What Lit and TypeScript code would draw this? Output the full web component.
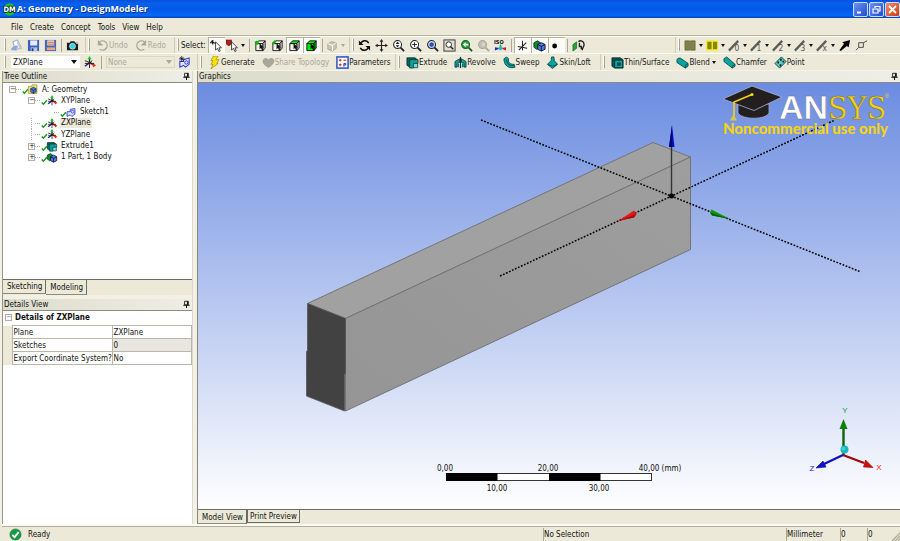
import { LitElement, html, svg, css, TemplateResult, SVGTemplateResult } from "lit";
import { customElement, property, state } from "lit/decorators.js";
import { classMap } from "lit/directives/class-map.js";

const cube = (front: string, top: string, side: string) => svg`
  <path d="M2 5 L5 2 H12 L9.5 5 Z" fill=${top} stroke="#000" stroke-width=".9"/>
  <path d="M9.5 5 L12 2 V10 L9.5 12.5 Z" fill=${side} stroke="#000" stroke-width=".9"/>
  <path d="M2 5 H9.5 V12.5 H2 Z" fill=${front} stroke="#000" stroke-width=".9"/>`;
const pick = svg`<path d="M6 4.5 V11 L7.5 9.6 L8.6 12 L9.8 11.4 L8.7 9.2 H10.8 Z" fill="#111"/>`;
const lens = (inner: SVGTemplateResult, glass = "#fff", ink = "#222") => svg`
  <path d="M9 9 L13 13" stroke=${ink} stroke-width="2"/>
  <circle cx="6" cy="6" r="4.3" fill=${glass} stroke=${ink} stroke-width="1.1"/>${inner}`;
const pencil = (label: string) => svg`
  <path d="M1 12.5 L11 2" stroke="#5c5c58" stroke-width="2.4"/>
  <text x="7" y="13" font-size="9" fill="#555">${label}</text>`;
const teal = "#08a5a0";

const icons: Record<string, SVGTemplateResult> = {
  fresh: svg`<path d="M3 3 L8 1 L12 9 L6 12 Z" fill="#fff" stroke="#8c9bc0"/><path d="M1 11 C4 7 7 6 9 8 L6 12 H2 Z" fill="#8fa4d8"/><path d="M8 3 L12 11" stroke="#bcc7e2" stroke-width="2"/>`,
  save: svg`<path d="M1 1 H13 V13 H1 Z" fill="#3c62c4"/><path d="M3.5 1.5 H11 V7 H3.5 Z" fill="#e8edfa"/><path d="M4 9 H11 V13 H4 Z" fill="#b9c5e6"/><path d="M5 10 H7 V13 H5 Z" fill="#24418e"/>`,
  export: svg`<path d="M1 1 H13 V13 H1 Z" fill="#4767b8"/><path d="M3.5 1.5 H11 V7 H3.5 Z" fill="#f2e9df"/><path d="M4 3.5 H11 M4 5.5 H11" stroke="#d25a2a"/><path d="M3 9 H12 V12 H3 Z" fill="#e9a882"/>`,
  camera: svg`<path d="M1 4 H4 L5 2.5 H9 L10 4 H13 V12 H1 Z" fill="#1b1b22"/><circle cx="7" cy="7.8" r="3.2" fill="#35d6e4" stroke="#fff" stroke-width=".6"/><path d="M11 4.8 H13" stroke="#ddd"/>`,
  undo: svg`<path d="M3 4 A5 5 0 1 1 4 11" fill="none" stroke="#aaa89a" stroke-width="1.5"/><path d="M2 1 V7 H8 Z" fill="#aaa89a"/>`,
  redo: svg`<path d="M11 4 A5 5 0 1 0 10 11" fill="none" stroke="#aaa89a" stroke-width="1.5"/><path d="M12 1 V7 H6 Z" fill="#aaa89a"/>`,
  arrow: svg`<path d="M1 2 L6 5 M3 1 V6 M0 4 H5" stroke="#111" stroke-width="1.2"/><path d="M6 3 V12 L8 10 L9.6 13.5 L11 12.8 L9.6 9.5 H12.4 Z" fill="#fff" stroke="#111" stroke-width=".8"/>`,
  filter: svg`<path d="M0 1 H6 V5 L4 7 H2 L0 5 Z" fill="#a22" stroke="#500" stroke-width=".5"/><path d="M6 3 V12 L8 10 L9.6 13.5 L11 12.8 L9.6 9.5 H12.4 Z" fill="#fff" stroke="#111" stroke-width=".8"/>`,
  selPoint: svg`${cube("#f4f3ea", "#fff", "#ddd")}${pick}<circle cx="3" cy="4" r="2.2" fill="#0b0"/>`,
  selEdge: svg`${cube("#f4f3ea", "#fff", "#ddd")}${pick}<path d="M2 5 L5 2" stroke="#0b0" stroke-width="2.6"/>`,
  selFace: svg`${cube("#f4f3ea", "#0e0", "#ddd")}${pick}`,
  selBody: svg`${cube("#0e0", "#0e0", "#0a0")}${pick}`,
  extend: svg`<path d="M2 5 L6 3 L11 4 V10 L7 13 L2 11 Z" fill="#c9c6b6" stroke="#aaa89a"/><path d="M2 5 L7 7 L11 4 M7 7 V13" stroke="#fff" fill="none"/>`,
  rotate: svg`<path d="M3 5 A4.5 4.5 0 0 1 11.5 4.6 M11 9 A4.5 4.5 0 0 1 2.500 9.4" fill="none" stroke="#111" stroke-width="1.6"/><path d="M1 1.5 V6.5 H6 Z M13 12.5 V7.5 H8 Z" fill="#111"/>`,
  pan: svg`<path d="M7 2 V12 M2 7 H12" stroke="#222" stroke-width="1.2"/><path d="M7 0 L9 3 H5 Z M7 14 L9 11 H5 Z M0 7 L3 5 V9 Z M14 7 L11 5 V9 Z" fill="#222"/>`,
  zoomDrag: lens(svg`<path d="M6 2.8 L8 5.3 H4 Z M6 9.2 L8 6.7 H4 Z" fill="#222"/>`),
  zoomIn: lens(svg`<path d="M6 3.5 V8.5 M3.5 6 H8.5" stroke="#222"/>`),
  zoomFit: lens(svg`<path d="M4 4.5 L6 3.5 L8.3 4.5 V7.5 L6 8.6 L3.8 7.5 Z" fill="#2451b8"/>`, "#c9d6f4"),
  zoomBox: svg`<rect x="1" y="1" width="12" height="12" fill="#e3e0d2" stroke="#333"/><path d="M8 8 L11 11" stroke="#222" stroke-width="1.6"/><circle cx="6.2" cy="6" r="3" fill="#fff" stroke="#222"/>`,
  zoomPrev: lens(svg`<path d="M3 6 L6 3.4 V5 H9 V7 H6 V8.6 Z" fill="#fff"/>`, "#29a33a", "#14601f"),
  zoomNext: lens(svg`<path d="M9 6 L6 3.4 V8.6 Z" fill="#ddd"/>`, "#c4c1b2", "#aaa89a"),
  iso: svg`<text x="0" y="5" font-size="6" font-weight="bold" fill="#111">ISO</text><path d="M7 6 V10" stroke="#1a1" stroke-width="1.6"/><path d="M7 10 L13 9 V12.5 Z" fill="#c22"/><path d="M7 10 L1 9 V12.5 Z" fill="#22c"/><circle cx="7" cy="10" r="2.2" fill="#2bc"/>`,
  axes: svg`<path d="M7 2 V12 M2 8 L12 10 M11 4 L3 12" stroke="#222" stroke-width="1.1"/>`,
  model: svg`<path d="M1 4 L5 2 L8 4 V9 L4 11 L1 9 Z" fill="#118a2a" stroke="#042"/><path d="M5 6 L9 4 L13 6 V11 L9 13 L5 11 Z" fill="#4a7fe0" stroke="#113"/><path d="M5 6 L9 8 L13 6 M9 8 V13" stroke="#113" fill="none"/>`,
  dot: svg`<circle cx="5" cy="7.5" r="2.6" fill="#000"/>`,
  lookAt: svg`<path d="M1 6 L5 3 V10 L1 13 Z" fill="#2aa52a" stroke="#063" stroke-width=".7"/><path d="M7 3 C9 1 13 2 13 6 C13 9 11 9 11 12 M8 4 V8 H10 V11" fill="none" stroke="#222" stroke-width="1.5"/>`,
  olive: svg`<path d="M1 2 H6 V12 H1 Z M7 2 H12 V12 H7 Z" fill="#828048" stroke="#606035" stroke-width=".7"/>`,
  yellow: svg`<path d="M0 1.5 H13 V12.5 H0 Z" fill="#f2ee20"/><path d="M1.5 3 H6 V11 H1.5 Z M7.5 3 H12 V11 H7.5 Z" fill="#8a8600"/>`,
  p0: pencil("0"), p1: pencil("1"), p2: pencil("2"), p3: pencil("3"), px: pencil("x"),
  dart: svg`<path d="M13 1 L11.5 9 L9.5 7.5 L3 13 L1.5 12 L6.5 5 L4.5 3.5 Z" fill="#000"/>`,
  node: svg`<path d="M4 4 H9 V9 H4 Z" fill="none" stroke="#444"/><path d="M9 4 L13 2 M4 9 L1 12" stroke="#444"/>`,
  plane: svg`<path d="M7 7 L2 11" stroke="#22c" stroke-width="1.6"/><path d="M7 7 L12 10" stroke="#d22" stroke-width="2"/><path d="M7 9 V2" stroke="#161" stroke-width="1.4"/><path d="M7 0 L9.2 3.6 H4.8 Z" fill="#1c1"/><path d="M2 5 L12 9 M2 8 H12 M10 5 L4 10 M7 4 V13" stroke="#222" stroke-width="1"/><path d="M10 8 L14 10 L11 12 Z" fill="#e22"/>`,
  sketch: svg`<path d="M2 6 H6 V3 L12 2 V9 L8 12 L6 10 L2 12 Z" fill="#dfe4ff" stroke="#2a36cc" stroke-width="1.1"/><circle cx="9" cy="6" r="1.8" fill="none" stroke="#2a36cc"/>`,
  newSketch: svg`<path d="M2 6 H6 V4 L12 2 V9 L8 12 L6 10 L2 12 Z" fill="#dfe4ff" stroke="#2a36cc" stroke-width="1.1"/><circle cx="9" cy="7" r="1.8" fill="none" stroke="#2a36cc"/><path d="M1 3 H7 M4 0 V6 M2 1 L6 5 M6 1 L2 5" stroke="#111" stroke-width=".8"/>`,
  bolt: svg`<path d="M6 0 H11 L8.5 4 H12 L9.5 8 H11 L3 14 L5.5 9 H3 L5.5 5 H3 Z" fill="#f8e20c" stroke="#8a7a00" stroke-width=".6"/>`,
  heart: svg`<path d="M7 13 C1 9 0 7 1 4 C3 1 6 2 7 4 C8 2 11 1 13 4 C14 7 12 9 7 13 Z" fill="#a9a79a"/>`,
  params: svg`<rect x="1" y="1" width="12" height="12" fill="#fff" stroke="#2452c8" stroke-width="1.6"/><path d="M3 4.5 H6 M4.5 3 V6 M8 4.5 H11 M3 9.5 H6 M4.5 8 V11" stroke="#c22" stroke-width="1.1"/><path d="M8.5 11.5 V8 H10.5 V9.6 H8.5" stroke="#22c" fill="none"/>`,
  extrude: svg`<path d="M1 2 H10 L12 4 H4 V12 L1 10 Z" fill="#066" stroke="#022" stroke-width=".8"/><path d="M4 4 H13 V8 H8 V13 H4 Z" fill=${teal} stroke="#033" stroke-width=".8"/><path d="M8 8 H12.6 V12.6 H8 Z" fill="#7fd8d4" stroke="#033" stroke-width=".8"/>`,
  revolve: svg`<path d="M7 1 V13" stroke="#033" stroke-width="1.2"/><path d="M6 3 L1 6 V12 H3 V8 L6 7 Z M8 3 L13 6 V12 H11 V8 L8 7 Z" fill=${teal} stroke="#033" stroke-width=".8"/><path d="M4.5 8 V12 M9.500 8 V12" stroke="#077" stroke-width="2"/>`,
  sweep: svg`<path d="M1 3 L4 1 L6 3 C5 7 8 9 12 9 L13 12 C7 14 1 11 1 3 Z" fill=${teal} stroke="#033" stroke-width=".8"/><path d="M4 4 C4 9 8 11 12 10" fill="none" stroke="#044"/>`,
  loft: svg`<path d="M6 1 H8.5 L9 5 L12.5 9 L7 13.4 L1.5 9 L5.5 5 Z" fill=${teal} stroke="#033" stroke-width=".8"/><path d="M2 9.2 L7 11 L12 9.2" fill="none" stroke="#055"/>`,
  thin: svg`<path d="M1 2 H10 L13 4 V13 H4 L1 11 Z" fill="#055" stroke="#022" stroke-width=".8"/><path d="M4 4.5 H12.6 V12.6 H4 Z" fill=${teal} stroke="#022" stroke-width=".8"/><path d="M6.5 7 H10.5 V10.5 H6.5 Z" fill="#044"/>`,
  blend: svg`<path d="M1 4 C2 2 4 2 5 2.5 L13 8 V11 L10 13 L1 7 Z" fill=${teal} stroke="#033" stroke-width=".8"/><path d="M13 8 L10 10 V13" fill="none" stroke="#033" stroke-width=".7"/>`,
  chamfer: svg`<path d="M1 3 L4 1 L13 9 V11 L10 13 L1 6 Z" fill=${teal} stroke="#033" stroke-width=".8"/><path d="M13 9 L10 11 V13" fill="none" stroke="#033" stroke-width=".7"/>`,
  point: svg`<path d="M1 8 L8 1 L13 6 L6 13 Z" fill="#5fc9c5" stroke="#033" stroke-width=".9"/><path d="M7.500 3 V5 M4.500 6 V8 M7 9 V11 M10 5 V7" stroke="#022" stroke-width="1.8"/>`,
  project: svg`<path d="M1 3 H5 L6 1 H12 V12 H1 Z" fill="#f3e27c" stroke="#8f7d20" stroke-width=".8"/><path d="M4 6 L7.5 4 L11 6 V10 L7.5 12 L4 10 Z" fill="#4a7fe0" stroke="#113" stroke-width=".8"/><path d="M4 6 L7.5 8 L11 6 M7.5 8 V12" stroke="#113" stroke-width=".8" fill="none"/>`,
  check: svg`<path d="M3 8 L6 11 L12 4" fill="none" stroke="#149a14" stroke-width="2.4"/>`,
  pin: svg`<path d="M4 2 H10 V7.5 H4 Z" fill="none" stroke="#111" stroke-width="1.3"/><path d="M8.5 2 V7 M2 8 H12 M7 8 V12.5" stroke="#111" stroke-width="1.6"/>`,
  app: svg`<circle cx="7" cy="7" r="6.6" fill="#1cc42a"/><text x="7" y="10" text-anchor="middle" font-size="8" font-weight="bold" fill="#fff" stroke="#022" stroke-width="1.6" paint-order="stroke">DM</text>`,
  ready: svg`<circle cx="7" cy="7" r="6" fill="#169a48" stroke="#0c6e30" stroke-width=".6"/><path d="M3.6 7.4 L6 9.8 L10.4 4.4" stroke="#fff" stroke-width="2" fill="none"/>`,
};

const icon = (name: string, cls = "icon") =>
  html`<svg class=${cls} viewBox="0 0 14 14" aria-hidden="true">${icons[name]}</svg>`;

interface Tool { icon?: string; label?: string; on?: boolean; off?: boolean; menu?: boolean; sep?: boolean }

const S: Tool = { sep: true };

@customElement("tool-group")
class ToolGroup extends LitElement {
  @property({ attribute: false }) tools: Tool[] = [];

  static styles = css`
    :host { display: flex; align-items: center; height: 100%; border-right: 1px solid #cfccba; box-sizing: border-box; }
    .grip { width: 2px; height: 12px; margin: 0 2px; border-right: 1px solid #a5a28f; border-left: 1px solid #fff; box-sizing: border-box; flex: none; }
    .sep { width: 1px; height: 13px; margin: 0 2px; background: #a9a694; }
    button { display: flex; align-items: center; justify-content: center; height: 16px; min-width: 17px; padding: 0 1px;
      margin: 0; border: 0; background: none; color: #1a1a1a; font: inherit; white-space: nowrap; }
    button.menu { min-width: 22px; gap: 2px; }
    button.text { padding: 0 3px 0 4px; gap: 0; }
    button.on { background: #fbfaf5; box-shadow: inset 1px 1px #b4b19f; }
    button:disabled { color: #aaa89a; }
    button.menu.off .caret { border-top-color: #aaa89a; }
    .icon { width: 13px; height: 13px; flex: none; }
    .caret { border: 2px solid transparent; border-top: 3px solid #111; border-bottom: 0; }
    button.text .caret { margin-left: 2px; }
  `;

  render() {
    return html`<span class="grip"></span><slot></slot>${this.tools.map((t) =>
      t.sep
        ? html`<span class="sep"></span>`
        : html`<button class=${classMap({ on: !!t.on, off: !!t.off, menu: !!t.menu, text: !!t.label })}
            ?disabled=${!!t.off} aria-label=${t.label ?? t.icon ?? ""}>
            ${icon(t.icon!)}${t.label ? html`<span>${t.label}</span>` : ""}${t.menu ? html`<span class="caret"></span>` : ""}
          </button>`)}`;
  }
}

@customElement("model-scene")
class ModelScene extends LitElement {
  static styles = css`
    :host { display: block; flex: 1; min-height: 0; background: linear-gradient(#6b8ce0, #ffffff); overflow: hidden; }
    svg { display: block; width: 100%; height: 100%; }
    .scale { font: 8px "DejaVu Sans Condensed", "DejaVu Sans", sans-serif; fill: #111; text-anchor: middle; }
    .note { font: 900 15px Lato, sans-serif; fill: #f6d313; }
    .sans { font: bold 34px "Liberation Sans", sans-serif; fill: #fff; stroke: #6b7394; stroke-width: .5; }
    .serif { font: 32px "DejaVu Serif Condensed", "DejaVu Serif", serif; fill: #f6d313; stroke: #75703c; stroke-width: .5; }
    .reg { font: 5px "Liberation Sans", sans-serif; fill: #f6d313; stroke: none; }
    .axis { font: 8px "Liberation Sans", sans-serif; text-anchor: middle; }
    .dots { stroke: #000; stroke-width: 1.5; stroke-dasharray: 1.8 1.5; }
    .edge { stroke: #747474; stroke-width: 1; stroke-linejoin: round; }
  `;

  render() {
    return html`<svg viewBox="198 83 702 426" role="img" aria-label="Extruded block">
      <defs>
        <linearGradient id="side" x1="0" y1="1" x2="1" y2="0"><stop offset="0" stop-color="#959595"/><stop offset="1" stop-color="#9e9e9e"/></linearGradient>
      </defs>
      <path class="edge" d="M307.500 303.500 L653 142.500 L690.500 157 L345.500 318.500 Z" fill="#a1a1a1"/>
      <path class="edge" d="M345.500 318.500 L690.500 157 V249.500 L345.500 411 Z" fill="url(#side)"/>
      <path d="M307.500 303.500 L345.500 318.500 V373 L344.500 375 V411 L306.500 396 V352 L307.500 350 Z" fill="#424242" stroke="#555" stroke-width=".8"/>

      <path d="M738 104 H769 V113 C766 120 742 120 738 113 Z" fill="#231f20" stroke="#aab4d6" stroke-width=".7"/>
      <path d="M723 99 L752 86 L782 97 L754 110.500 Z" fill="#231f20" stroke="#aab4d6" stroke-width=".8"/>
      <path d="M752 94.500 L734 102 V116" fill="none" stroke="#f6d313" stroke-width="1.6"/>
      <circle cx="752" cy="94.500" r="1.600" fill="#f6d313"/>
      <path d="M733.500 114 L737 120.500 H730 Z" fill="#d9c54a"/>
      <text class="sans" x="779" y="119">AN<tspan class="serif" x="828">SYS</tspan><tspan class="reg" x="885" y="98">®</tspan></text>

      <path class="dots" d="M481 120 L861 272"/>
      <path class="dots" d="M500 276 L835 120"/>
      <text class="note" x="723" y="134">Noncommercial use only</text>
      <path d="M671.500 196 V146" stroke="#333" stroke-width="1.4"/>
      <path d="M672 125 L674.500 147 H669 Z" fill="#0c0cb4"/><path d="M672 125 V147 H669 Z" fill="#05057a"/>
      <path d="M618 221 L634 210.500 L636.500 214 L634 217.500 Z" fill="#e01818"/><path d="M618 221 L636.500 214 L634 217.500 Z" fill="#a80c0c"/>
      <path d="M730 219 L711.500 209.500 L710 212.500 L712 215.500 Z" fill="#0c980c"/><path d="M730 219 L710 212.500 L712 215.500 Z" fill="#056205"/>
      <circle cx="671.500" cy="196" r="2.500" fill="#000"/>

      <rect x="446.500" y="473.500" width="205" height="7" fill="#fff" stroke="#333"/>
      <path d="M446 473 H497.500 V481 H446 Z M549 473 H600.500 V481 H549 Z" fill="#000"/>
      <g class="scale">
        <text x="445" y="471">0,00</text><text x="548" y="471">20,00</text><text x="660" y="471">40,00 (mm)</text>
        <text x="497" y="491">10,00</text><text x="599" y="491">30,00</text>
      </g>

      <path d="M843.500 455 V428" stroke="#0a640a" stroke-width="2.4"/><path d="M843.500 419 L847.500 429 H839.500 Z" fill="#0a800a"/>
      <path d="M843 455 L864 463" stroke="#a00a0a" stroke-width="2.4"/><path d="M873 467.500 L865.500 460 L863.500 467 Z" fill="#cc1010" stroke="#900" stroke-width=".6"/>
      <path d="M843 455 L824 464" stroke="#1010c0" stroke-width="2.4"/><path d="M816 468 L823 461 L826 467 Z" fill="#1010c8" stroke="#009" stroke-width=".6"/>
      <circle cx="844.500" cy="449.500" r="4" fill="#18b8bc"/><circle cx="843.500" cy="448.500" r="1.800" fill="#3ad4d8"/>
      <g class="axis"><text x="845" y="413" fill="#0c9c2c">Y</text><text x="879" y="470" fill="#e22">X</text><text x="812" y="471" fill="#22d">Z</text></g>
    </svg>`;
  }
}

interface TreeNode { label: string; icon: string; level: number; box?: string }

@customElement("app-root")
class AppRoot extends LitElement {
  @state() private selected = "ZXPlane";

  private menus = ["File", "Create", "Concept", "Tools", "View", "Help"];

  private nodes: TreeNode[] = [
    { label: "A: Geometry", icon: "project", level: 0, box: "−" },
    { label: "XYPlane", icon: "plane", level: 1, box: "−" },
    { label: "Sketch1", icon: "sketch", level: 2 },
    { label: "ZXPlane", icon: "plane", level: 1 },
    { label: "YZPlane", icon: "plane", level: 1 },
    { label: "Extrude1", icon: "extrude", level: 1, box: "+" },
    { label: "1 Part, 1 Body", icon: "model", level: 1, box: "+" },
  ];

  private details = [["Plane", "ZXPlane"], ["Sketches", "0"], ["Export Coordinate System?", "No"]];

  static styles = css`
    :host { display: flex; flex-direction: column; height: 100vh; overflow: hidden; background: #ece9d8; color: #111;
      font: 8px/11px "DejaVu Sans Condensed", "DejaVu Sans", sans-serif; }
    * { box-sizing: border-box; }
    button, select { font: inherit; color: inherit; margin: 0; }
    .icon { width: 13px; height: 13px; flex: none; }
    .title { display: flex; align-items: center; height: 18px; flex: none; padding: 0 0 0 3px; gap: 1px;
      background: linear-gradient(#0a50d8, #0560ee 20%, #0458e4 50%, #0668fa 85%, #0342b8); color: #fff; }
    .title h1 { flex: 1; margin: 0; font: bold 9px/14px "Open Sans", "Noto Sans", sans-serif; text-shadow: 1px 1px #0a2f86; }
    .title button { width: 15px; height: 15px; padding: 0; border: 1px solid #cfdcf8; border-radius: 2px;
      background: linear-gradient(135deg, #6d94f2, #1d4bd0); display: grid; place-items: center; }
    .title button.close { background: linear-gradient(135deg, #f08c6c, #d03a10); }
    .title button svg { width: 11px; height: 11px; }
    .menu { display: flex; align-items: center; gap: 7px; height: 18px; flex: none; padding: 1px 0 0 11px; border-bottom: 1px solid #b5b2a0; }
    .menu button { border: 0; padding: 0; background: none; }
    .bar { display: flex; align-items: center; height: 17px; flex: none; padding-left: 2px; border-top: 1px solid #fff; }
    .bar + .bar { height: 18px; border-bottom: 1px solid #f6f4ea; }
    .sel { padding-right: 2px; }
    .files { min-width: 84px; } .history { min-width: 89px; } .picks { min-width: 175px; }
    .wide { min-width: 326px; }
    .last { border-right: 0; }
    .g1 { min-width: 196px; } .g2 { min-width: 198px; } .g3 { min-width: 205px; }
    .combo { display: grid; align-items: center; width: 69px; height: 12px; margin: 0 2px 0 3px; background: #fff; }
    .combo > * { grid-area: 1 / 1; }
    .combo::after { content: ""; grid-area: 1 / 1; justify-self: end; margin-right: 3px; border: 3px solid transparent; border-top: 4px solid #111; border-bottom: 0; pointer-events: none; }
    .combo.off { background: #ece9d8; color: #aaa89a; box-shadow: inset 0 0 0 1px #dad7c6; }
    .combo.off::after { border-top-color: #aaa89a; }
    .combo select { appearance: none; border: 0; background: none; padding: 0 2px; width: 100%; height: 12px; opacity: 1; }
    .mini { border: 0; background: none; padding: 0 1px; height: 14px; display: flex; align-items: center; }
    .vsep { width: 1px; height: 13px; background: #a9a694; margin: 0 1px 0 4px; }
    .work { flex: 1; display: flex; gap: 4px; min-height: 0; padding-left: 2px; background: #f3f1e6; }
    .side { width: 191px; flex: none; display: flex; flex-direction: column; gap: 4px; border-left: 1px solid #98958a; border-right: 1px solid #dcd9ca; }
    .pane { display: flex; flex-direction: column; background: #ece9d8; min-height: 0; }
    .outline { flex: 224 1 0; } .detail { flex: 226 1 0; }
    .view { flex: 1; min-width: 0; border-left: 1px solid #88857a; }
    header { display: flex; justify-content: space-between; align-items: center; height: 12px; flex: none; padding: 0 1px;
      background: linear-gradient(90deg, #dcdccb, #efeee6); border-bottom: 1px solid #8d8b7d; }
    header h2 { margin: 0; font: inherit; }
    header .icon { width: 9px; height: 9px; }
    .body { flex: 1; min-height: 0; background: #fff; border-bottom: 1px solid #6e6c60; }
    .detail .body { border-bottom: 0; }
    ul { list-style: none; margin: 0; padding: 1px 0 0 6px; height: 80px; display: flex; flex-direction: column; }
    li { flex: 1 1 0; min-height: 0; display: flex; align-items: center; }
    .l1 { padding-left: 19px; } .l2 { padding-left: 38px; }
    .box { display: grid; place-items: center; width: 7px; height: 7px; border: 1px solid #b2b0a6; font: 7px/5px "DejaVu Sans", sans-serif; padding: 0; background: #fff; flex: none; }
    .blank { width: 7px; height: 7px; flex: none; }
    .l1 .blank { border-left: 1px dotted #aaa; margin-left: 3px; width: 4px; height: 100%; }
    .stub { width: 5px; border-top: 1px dotted #aaa; }
    .check { width: 8px; height: 8px; margin: 3px -2px 0 0; flex: none; }
    li .icon { width: 12px; height: 11px; }
    .name { border: 0; background: none; padding: 0 1px; margin-left: 2px; line-height: 10px; white-space: nowrap; }
    .name.on { background: #ece9d8; }
    .tabs { display: flex; height: 15px; flex: none; align-items: flex-start; }
    .tabs button { height: 14px; padding: 0 3px 0 4px; border: 0; border-right: 1px solid #6e6c60; border-bottom: 1px solid #8d8b7d; background: #ece9d8; white-space: nowrap; }
    .tabs button.on { height: 15px; padding-top: 2px; }
    .view .tabs { border-top: 1px solid #6e6c60; }
    .view .tabs .other { border: 1px solid #6e6c60; border-top: 0; padding: 0 2px; height: 13px; }
    .view .tabs .on { height: 14px; }
    table { border-collapse: collapse; width: 100%; table-layout: fixed; }
    th { text-align: left; font-weight: bold; padding: 0; height: 15px; }
    th span { display: flex; align-items: center; gap: 3px; padding-left: 2px; }
    th .box { color: #777; }
    td { padding: 0 1px 0 1px; border: 1px solid #bab7aa; line-height: 11px; white-space: nowrap; height: 13px; }
    td.gut { border: 0; background: #ece9d8; padding: 0; }
    td.gray { background: #e8e6e0; }
    .c1 { width: 9px; } .c2 { width: 100px; }
    .status { display: flex; align-items: center; height: 15px; flex: none; margin: 2px 0 0 2px; border-top: 1px solid #b0ad9c; box-shadow: 0 -2px #fbfaf5; }
    .status div { height: 13px; display: flex; align-items: center; border-left: 1px solid #a9a694; white-space: nowrap; }
    .status .main { flex: 1; border-left: 0; padding-left: 7px; gap: 6px; }
    .w1 { width: 243px; } .w2 { width: 54px; } .w3 { width: 27px; } .w4 { width: 24px; }
    .status .size { width: 9px; height: 9px; align-self: flex-end; }
  `;

  private frame(title: string) {
    return html`<header><h2>${title}</h2>${icon("pin")}</header>`;
  }

  private row(n: TreeNode): TemplateResult {
    return html`<li class="l${n.level}">
      ${n.box ? html`<button class="box" aria-label="toggle ${n.label}">${n.box}</button>` : html`<span class="blank"></span>`}
      <span class="stub"></span>${icon("check", "check")}${icon(n.icon)}
      <button class=${classMap({ name: true, on: n.label === this.selected })} @click=${() => (this.selected = n.label)}>${n.label}</button>
    </li>`;
  }

  render() {
    return html`
      <div class="title">${icon("app")}<h1>A: Geometry - DesignModeler</h1>
        <button aria-label="Minimize"><svg viewBox="0 0 11 11"><path d="M2 8.500 H6" stroke="#fff" stroke-width="2"/></svg></button>
        <button aria-label="Restore"><svg viewBox="0 0 11 11"><path d="M4 2.500 H9 V7 H7.500 M4 2 V4 M2 5 H7 V9 H2 Z" stroke="#fff" stroke-width="1.200" fill="none"/></svg></button>
        <button class="close" aria-label="Close"><svg viewBox="0 0 11 11"><path d="M2 2 L9 9 M9 2 L2 9" stroke="#fff" stroke-width="1.800"/></svg></button>
      </div>
      <nav class="menu">${this.menus.map((m) => html`<button>${m}</button>`)}</nav>
      <div class="bar">
        <tool-group class="files" .tools=${[{ icon: "fresh" }, { icon: "save" }, { icon: "export" }, S, { icon: "camera" }]}></tool-group>
        <tool-group class="history" .tools=${[{ icon: "undo", label: "Undo", off: true }, { icon: "redo", label: "Redo", off: true }]}></tool-group>
        <tool-group class="picks" .tools=${[{ icon: "arrow", on: true }, { icon: "filter", menu: true }, S, { icon: "selPoint" }, { icon: "selEdge" },
          { icon: "selFace", on: true }, { icon: "selBody", on: true }, S, { icon: "extend", menu: true, off: true }]}><span class="sel">Select:</span></tool-group>
        <tool-group class="wide" .tools=${[{ icon: "rotate" }, { icon: "pan" }, { icon: "zoomDrag" }, { icon: "zoomIn" }, { icon: "zoomFit" }, { icon: "zoomBox" },
          { icon: "zoomPrev" }, { icon: "zoomNext", off: true }, { icon: "iso" }, S, { icon: "axes", on: true }, { icon: "model", on: true }, { icon: "dot", on: true }, S, { icon: "lookAt" }]}></tool-group>
        <tool-group class="last" .tools=${[...["olive", "yellow", "p0", "p1", "p2", "p3", "px"].map((i) => ({ icon: i, menu: true })), { icon: "dart" }, { icon: "node" }]}></tool-group>
      </div>
      <div class="bar">
        <tool-group class="g1">
          <label class="combo"><select aria-label="Active plane"><option>ZXPlane</option></select></label>
          <button class="mini" aria-label="New plane">${icon("plane")}</button><span class="vsep"></span>
          <label class="combo off"><select aria-label="Active sketch" disabled><option>None</option></select></label>
          <button class="mini" aria-label="New sketch">${icon("newSketch")}</button>
        </tool-group>
        <tool-group class="g2" .tools=${[{ icon: "bolt", label: "Generate" }, { icon: "heart", label: "Share Topology", off: true }, { icon: "params", label: "Parameters" }]}></tool-group>
        <tool-group class="g3" .tools=${[{ icon: "extrude", label: "Extrude" }, { icon: "revolve", label: "Revolve" }, { icon: "sweep", label: "Sweep" }, { icon: "loft", label: "Skin/Loft" }]}></tool-group>
        <tool-group class="last" .tools=${[{ icon: "thin", label: "Thin/Surface" }, { icon: "blend", label: "Blend", menu: true }, { icon: "chamfer", label: "Chamfer" }, { icon: "point", label: "Point" }]}></tool-group>
      </div>
      <main class="work">
        <div class="side">
          <section class="pane outline">${this.frame("Tree Outline")}
            <div class="body"><ul>${this.nodes.map((n) => this.row(n))}</ul></div>
            <div class="tabs"><button>Sketching</button><button class="on">Modeling</button></div>
          </section>
          <section class="pane detail">${this.frame("Details View")}
            <div class="body"><table>
              <colgroup><col class="c1"><col class="c2"><col></colgroup>
              <tr><th colspan="3"><span><button class="box" aria-label="toggle details">−</button>Details of ZXPlane</span></th></tr>
              ${this.details.map(([k, v]) => html`<tr><td class="gut"></td><td>${k}</td><td class=${v === "0" ? "gray" : ""}>${v}</td></tr>`)}
            </table></div>
          </section>
        </div>
        <section class="pane view">${this.frame("Graphics")}
          <model-scene></model-scene>
          <div class="tabs"><button class="on">Model View</button><button class="other">Print Preview</button></div>
        </section>
      </main>
      <footer class="status">
        <div class="main">${icon("ready")}Ready</div>
        <div class="w1">No Selection</div><div class="w2">Millimeter</div><div class="w3">0</div><div class="w4">0</div>
        <svg class="size" viewBox="0 0 9 9"><path d="M1 9 L9 1 M4 9 L9 4 M7 9 L9 7" stroke="#a9a694" stroke-width="1.200"/></svg>
      </footer>`;
  }
}
